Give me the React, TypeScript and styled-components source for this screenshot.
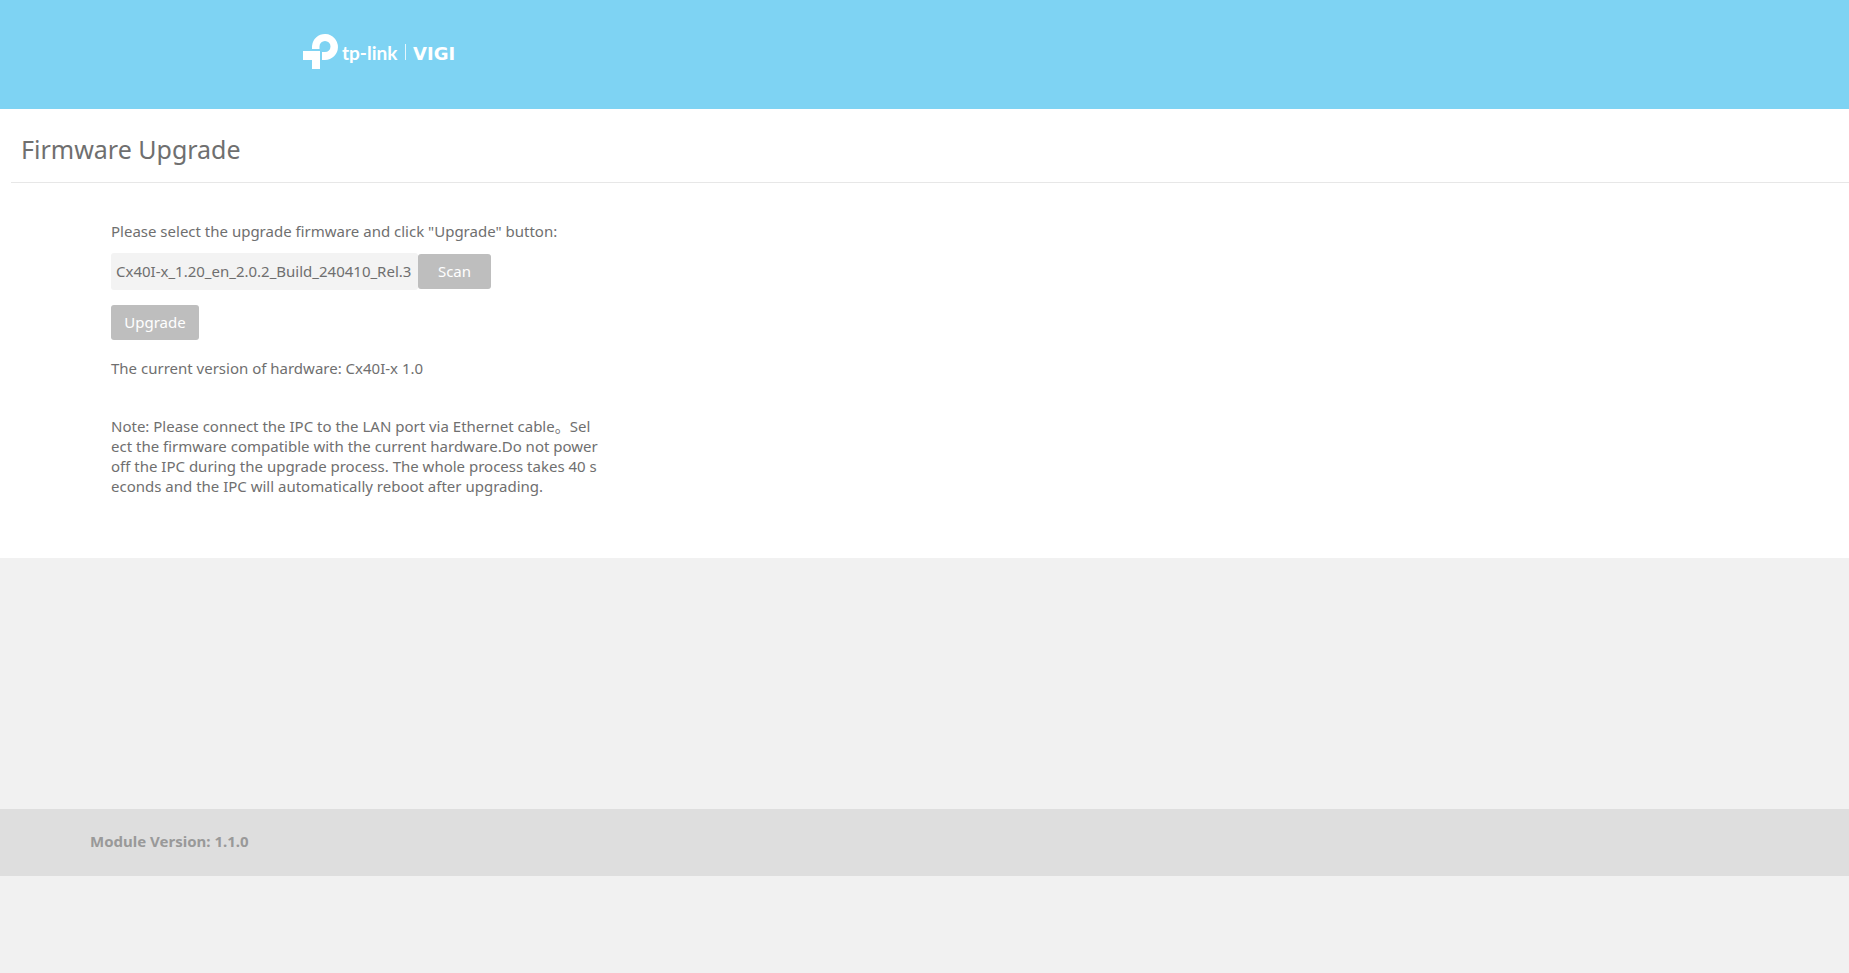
import React from "react";
import styled, { createGlobalStyle } from "styled-components";

const GlobalStyle = createGlobalStyle`
  *, *::before, *::after { box-sizing: border-box; }
  body {
    margin: 0;
    background: #f1f1f1;
    color: #6f6f6f;
    font: 15px/20px "Segoe UI", "Noto Sans", "Noto Sans CJK SC", sans-serif;
  }
`;

const Header = styled.header`
  height: 109px;
  padding: 32px 0 0 302px;
  background: #7ed3f3;
`;

const Logo = styled.svg`
  display: block;
  fill: #fff;
`;

const Main = styled.main`
  padding: 0 0 62px 11px;
  background: #fff;
`;

const Title = styled.h1`
  margin: 0;
  padding: 24px 0 17px 10px;
  border-bottom: 1px solid #e7e7e7;
  font-size: 25px;
  font-weight: 400;
  line-height: 32px;
`;

const Form = styled.form`
  display: flex;
  flex-direction: column;
  align-items: flex-start;
  padding: 38px 0 0 100px;
`;

const FileRow = styled.div`
  display: flex;
  align-items: center;
  margin: 12px 0 15px;
`;

const FileName = styled.input`
  width: 307px;
  height: 37px;
  padding: 0 0 2px 5px;
  border: 0;
  border-radius: 3px;
  background: #f3f3f3;
  color: inherit;
  font: inherit;
`;

const Button = styled.button<{ $width: number }>`
  width: ${(p) => p.$width}px;
  height: 35px;
  padding: 0 0 2px;
  border: 0;
  border-radius: 3px;
  background: #bebebe;
  color: #fff;
  font: inherit;
`;

const Text = styled.p<{ $top: number }>`
  margin: ${(p) => p.$top}px 0 0;
`;

const Footer = styled.footer`
  margin-top: 251px;
  padding: 22px 90px 25px;
  background: #dedede;
  color: #999;
  font-weight: 700;
`;

export default function App() {
  return (
    <>
      <GlobalStyle />
      <Header>
        <Logo width="153" height="40" viewBox="0 0 153 40" role="img" aria-label="tp-link VIGI">
          <path d="M10 17V14A13 13 0 1 1 23 28H20V20H23A5.500 5.500 0 1 0 17.500 14.500V17Z" />
          <path d="M1 19H18V28H18V37H10V28H1Z" />
          <text x="40" y="28" fontFamily="Lato" fontWeight="700" fontSize="19">tp-link</text>
          <rect x="103" y="12" width="1" height="16" opacity="0.8" />
          <text x="111" y="28" fontFamily="DejaVu Sans" fontWeight="700" fontSize="18">VIGI</text>
        </Logo>
      </Header>
      <Main>
        <Title>Firmware Upgrade</Title>
        <Form onSubmit={(e) => e.preventDefault()}>
          <label htmlFor="firmware">
            Please select the upgrade firmware and click "Upgrade" button:
          </label>
          <FileRow>
            <FileName id="firmware" type="text" readOnly value="Cx40I-x_1.20_en_2.0.2_Build_240410_Rel.3" />
            <Button type="button" $width={73}>Scan</Button>
          </FileRow>
          <Button type="submit" $width={88}>Upgrade</Button>
          <Text $top={18}>The current version of hardware: Cx40I-x 1.0</Text>
          <Text $top={38}>
            Note: Please connect the IPC to the LAN port via Ethernet cable。Sel
            <br />
            ect the firmware compatible with the current hardware.Do not power
            <br />
            off the IPC during the upgrade process. The whole process takes 40 s
            <br />
            econds and the IPC will automatically reboot after upgrading.
          </Text>
        </Form>
      </Main>
      <Footer>Module Version: 1.1.0</Footer>
    </>
  );
}
